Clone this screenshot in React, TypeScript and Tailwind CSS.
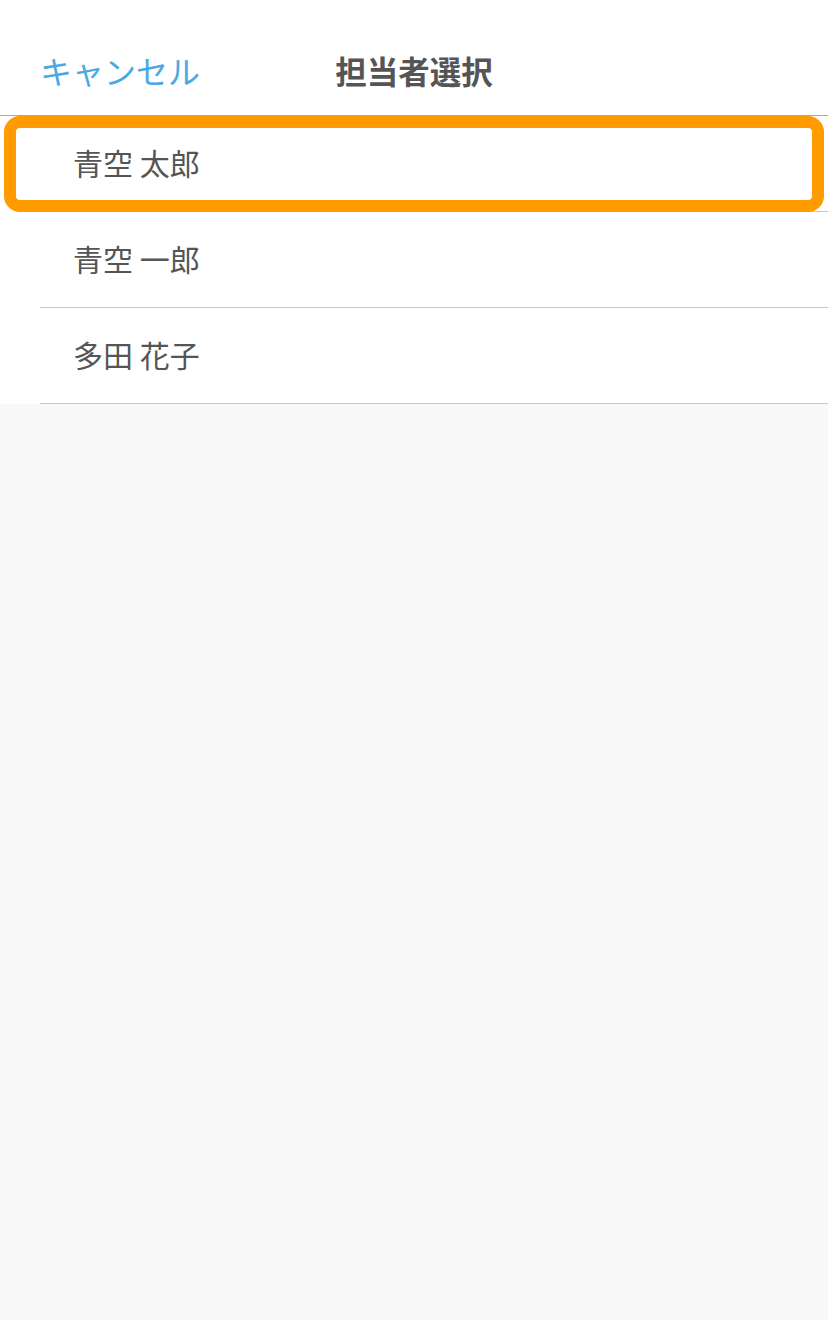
const people = ['青空 太郎', '青空 一郎', '多田 花子'];

const font = { fontFamily: '"Noto Sans CJK JP", "Noto Sans", sans-serif' };

export default function App() {
  return (
    <div className="min-h-[1320px] bg-[#f9f9f9]" style={font}>
      <header className="relative flex h-[116px] items-center border-b border-[#a9a9a9] bg-white pt-[24px]">
        <button className="pl-[40px] text-[32px] text-[#4aa9e2]">キャンセル</button>
        <h1 className="absolute left-0 right-0 top-[13px] flex h-full items-center justify-center text-[31.5px] font-bold text-[#555555] pointer-events-none">
          担当者選択
        </h1>
      </header>
      <ul className="bg-white">
        {people.map((name, i) => (
          <li key={name} className="relative">
            <div className="ml-[40px] flex h-[96px] items-center border-b border-[#c8c8c8] pb-[3px] pl-[33px] text-[30px] text-[#555555]">
              {name}
            </div>
            {i === 0 && (
              <div className="pointer-events-none absolute bottom-0 left-[4px] right-[4px] top-0 rounded-[16px] border-[12px] border-[#ff9a00]" />
            )}
          </li>
        ))}
      </ul>
    </div>
  );
}
